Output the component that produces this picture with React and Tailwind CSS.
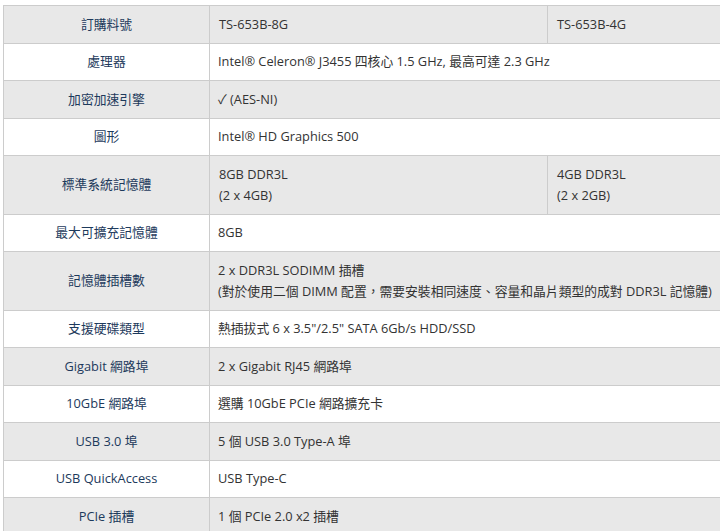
const rows = [
  { label: '訂購料號', values: ['TS-653B-8G', 'TS-653B-4G'] },
  { label: '處理器', value: 'Intel® Celeron® J3455 四核心 1.5 GHz, 最高可達 2.3 GHz' },
  { label: '加密加速引擎', value: '✓ (AES-NI)' },
  { label: '圖形', value: 'Intel® HD Graphics 500' },
  { label: '標準系統記憶體', values: [['8GB DDR3L', '(2 x 4GB)'], ['4GB DDR3L', '(2 x 2GB)']] },
  { label: '最大可擴充記憶體', value: '8GB' },
  {
    label: '記憶體插槽數',
    value: ['2 x DDR3L SODIMM 插槽', '(對於使用二個 DIMM 配置，需要安裝相同速度、容量和晶片類型的成對 DDR3L 記憶體)'],
  },
  { label: '支援硬碟類型', value: '熱插拔式 6 x 3.5"/2.5" SATA 6Gb/s HDD/SSD' },
  { label: 'Gigabit 網路埠', value: '2 x Gigabit RJ45 網路埠' },
  { label: '10GbE 網路埠', value: '選購 10GbE PCIe 網路擴充卡' },
  { label: 'USB 3.0 埠', value: '5 個 USB 3.0 Type-A 埠' },
  { label: 'USB QuickAccess', value: 'USB Type-C' },
  { label: 'PCIe 插槽', value: '1 個 PCIe 2.0 x2 插槽' },
]

// each line gets a fixed box so the CJK fallback can't stretch the row
function Lines({ text }) {
  const lines = Array.isArray(text) ? text : [text]
  return lines.map((line) => (
    <div className="h-[21px] whitespace-nowrap" key={line}>
      {line}
    </div>
  ))
}

const cell = 'border border-[#cccccc] py-[7.75px] align-middle leading-[21px]'

export default function App() {
  return (
    <div
      className="h-[531px] w-[720px] overflow-hidden bg-white pl-[3px] pt-[5px] text-[12.8px] text-[#333333]"
      style={{ fontFamily: '"Open Sans", "Noto Sans CJK TC", sans-serif' }}
    >
      <table className="w-[717px] table-fixed border-collapse">
        <colgroup>
          <col className="w-[206px]" />
          <col className="w-[338px]" />
          <col className="w-[173px]" />
        </colgroup>
        <tbody>
          {rows.map((row, i) => (
            <tr className={i % 2 === 0 ? 'bg-[#e8e8e8]' : 'bg-white'} key={row.label}>
              <td className={`${cell} px-2 text-center text-[#1d3a5c]`}>
                <Lines text={row.label} />
              </td>
              {row.values ? (
                row.values.map((v, j) => (
                  <td className={`${cell} pl-[9px] pr-2`} key={j}>
                    <Lines text={v} />
                  </td>
                ))
              ) : (
                <td className={`${cell} pl-[8px] pr-2`} colSpan={2}>
                  <Lines text={row.value} />
                </td>
              )}
            </tr>
          ))}
        </tbody>
      </table>
    </div>
  )
}
